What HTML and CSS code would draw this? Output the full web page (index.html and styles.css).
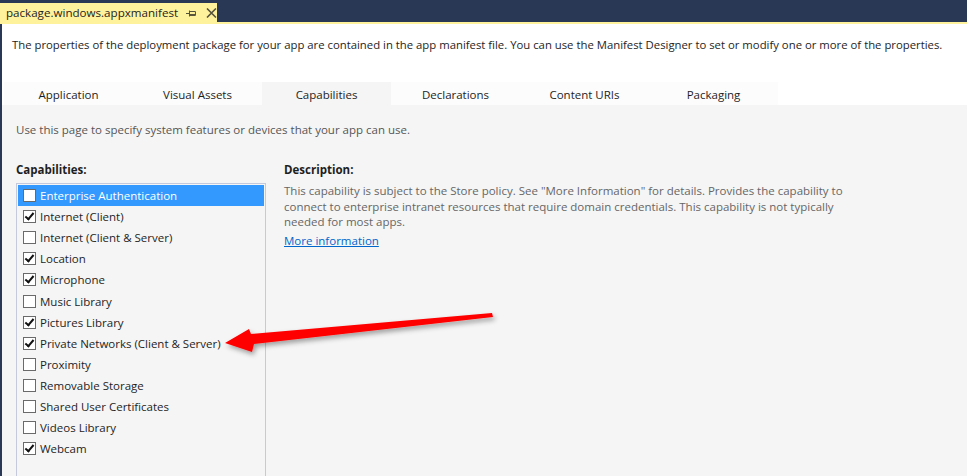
FILE: index.html
```html
<!DOCTYPE html>
<html>
<head>
<meta charset="utf-8">
<link rel="stylesheet" href="styles.css">
</head>
<body>
<div class="topbar">
  <div class="doctab">
    <span class="doctab-title">package.windows.appxmanifest</span>
    <svg class="pin" width="11" height="7" viewBox="0 0 11 7"><path d="M0 3.5H3.5M3.5 0.5V6.5M3.5 1.5H9.5V5.5H3.5M3.5 4.5H9.5" fill="none" stroke="#55523a" stroke-width="1"/></svg>
    <svg class="close" width="11" height="10" viewBox="0 0 11 10"><path d="M1 0.5L10 9.5M10 0.5L1 9.5" stroke="#55523a" stroke-width="1.6"/></svg>
  </div>
</div>
<div class="frame">
  <p class="intro">The properties of the deployment package for your app are contained in the app manifest file. You can use the Manifest Designer to set or modify one or more of the properties.</p>
  <div class="tabs">
    <div class="tab">Application</div>
    <div class="tab">Visual Assets</div>
    <div class="tab active">Capabilities</div>
    <div class="tab">Declarations</div>
    <div class="tab">Content URIs</div>
    <div class="tab">Packaging</div>
  </div>
  <div class="content">
    <p class="hint">Use this page to specify system features or devices that your app can use.</p>
    <div class="columns">
      <div class="capcol">
        <div class="label">Capabilities:</div>
        <div class="list">
          <div class="item selected"><span class="cb"></span>Enterprise Authentication</div>
          <div class="item"><span class="cb checked"></span>Internet (Client)</div>
          <div class="item"><span class="cb"></span>Internet (Client &amp; Server)</div>
          <div class="item"><span class="cb checked"></span>Location</div>
          <div class="item"><span class="cb checked"></span>Microphone</div>
          <div class="item"><span class="cb"></span>Music Library</div>
          <div class="item"><span class="cb checked"></span>Pictures Library</div>
          <div class="item"><span class="cb checked"></span>Private Networks (Client &amp; Server)</div>
          <div class="item"><span class="cb"></span>Proximity</div>
          <div class="item"><span class="cb"></span>Removable Storage</div>
          <div class="item"><span class="cb"></span>Shared User Certificates</div>
          <div class="item"><span class="cb"></span>Videos Library</div>
          <div class="item"><span class="cb checked"></span>Webcam</div>
        </div>
      </div>
      <div class="desccol">
        <div class="label">Description:</div>
        <p class="desc">This capability is subject to the Store policy. See "More Information" for details. Provides the capability to connect to enterprise intranet resources that require domain credentials. This capability is not typically needed for most apps.</p>
        <a class="more" href="#">More information</a>
      </div>
    </div>
  </div>
</div>
<svg class="arrow" width="967" height="476" viewBox="0 0 967 476">
  <defs>
    <filter id="sh" x="-10%" y="-50%" width="120%" height="200%">
      <feDropShadow dx="2" dy="3" stdDeviation="2.5" flood-color="#000" flood-opacity="0.35"/>
    </filter>
  </defs>
  <polygon filter="url(#sh)" fill="#ff0000" points="225,343 249,329 251,334 492,313 493,317 254,344 252,352"/>
</svg>
</body>
</html>
```
FILE: styles.css
```css
html, body {
  margin: 0;
  padding: 0;
}
body {
  width: 967px;
  height: 476px;
  overflow: hidden;
  background: #f5f5f5;
  font-family: "Open Sans", "Noto Sans", sans-serif;
  font-size: 11.5px;
  color: #1e1e1e;
  position: relative;
}
.topbar {
  height: 22px;
  background: #293955;
  border-bottom: 2px solid #fff29d;
  display: flex;
  align-items: flex-end;
}
.doctab {
  height: 19px;
  width: 217px;
  background: #fff29d;
  display: flex;
  align-items: center;
  box-sizing: border-box;
  padding-left: 6px;
  font-size: 11.6px;
}
.doctab-title {
  color: #1e1e1e;
}
.pin {
  margin-left: 8px;
  margin-top: 1px;
}
.close {
  margin-left: 9px;
}
.frame {
  border-left: 2px solid #293955;
  height: 452px;
  box-sizing: border-box;
}
.intro {
  margin: 0;
  background: #fff;
  padding: 13px 0 0 10px;
  height: 45px;
  white-space: nowrap;
  font-size: 11.33px;
}
.tabs {
  background: #fff;
  display: flex;
  height: 23px;
  padding-left: 2px;
}
.tab {
  width: 129px;
  text-align: center;
  line-height: 25px;
  background: #fcfcfc;
}
.tab.active {
  background: #f5f5f5;
}
.content {
  padding-left: 14px;
}
.hint {
  margin: 0;
  padding-top: 17px;
  color: #555;
  height: 30px;
}
.columns {
  display: flex;
  margin-top: 10px;
}
.capcol {
  width: 250px;
}
.label {
  font-weight: bold;
  color: #1e1e1e;
  height: 16px;
}
.list {
  margin-top: 5px;
  border: 1px solid #c5c9dc;
  height: 300px;
  padding: 1px;
  background: #f5f5f5;
}
.item {
  height: 21.1px;
  display: flex;
  align-items: center;
  padding-left: 5px;
  white-space: nowrap;
}
.item.selected {
  background: #3399ff;
  color: #fff;
}
.cb {
  width: 11px;
  height: 11px;
  border: 1px solid #6a6a6a;
  background: #fff;
  margin-right: 4px;
  position: relative;
  flex: none;
}
.cb.checked::after {
  content: "";
  position: absolute;
  left: 3px;
  top: 0px;
  width: 3px;
  height: 7px;
  border-right: 2px solid #111;
  border-bottom: 2px solid #111;
  transform: rotate(40deg);
}
.desccol {
  margin-left: 18px;
  width: 560px;
}
.desc {
  margin: 5px 0 0 0;
  color: #666;
  line-height: 15.5px;
}
.more {
  display: inline-block;
  margin-top: 3px;
  color: #0066cc;
}
.arrow {
  position: absolute;
  left: 0;
  top: 0;
  pointer-events: none;
}
```
